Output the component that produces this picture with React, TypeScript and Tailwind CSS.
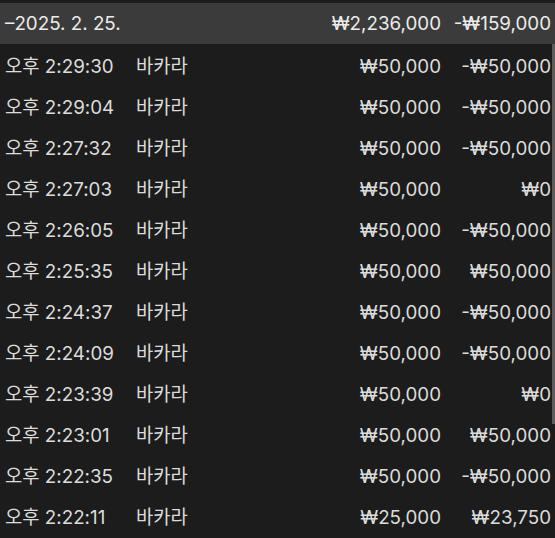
const rows: [string, string, string][] = [
  ['오후 2:29:30', '₩50,000', '-₩50,000'],
  ['오후 2:29:04', '₩50,000', '-₩50,000'],
  ['오후 2:27:32', '₩50,000', '-₩50,000'],
  ['오후 2:27:03', '₩50,000', '₩0'],
  ['오후 2:26:05', '₩50,000', '-₩50,000'],
  ['오후 2:25:35', '₩50,000', '₩50,000'],
  ['오후 2:24:37', '₩50,000', '-₩50,000'],
  ['오후 2:24:09', '₩50,000', '-₩50,000'],
  ['오후 2:23:39', '₩50,000', '₩0'],
  ['오후 2:23:01', '₩50,000', '₩50,000'],
  ['오후 2:22:35', '₩50,000', '-₩50,000'],
  ['오후 2:22:11', '₩25,000', '₩23,750'],
];

export default function App() {
  return (
    <div
      className="h-[538px] w-[555px] overflow-hidden bg-[#1c1c1c] pt-[3px] text-[18.8px] leading-none text-[#dcdcdc]"
      style={{ fontFamily: "Inter, 'Noto Sans CJK KR', sans-serif" }}
    >
      <div className="flex h-[41px] items-center bg-[#3b3b3b] pt-[2px] pl-[5px] pr-[4px] text-[#ececec]">
        <span className="flex-1">–2025. 2. 25.</span>
        <span className="w-[130px] text-right">₩2,236,000</span>
        <span className="w-[110px] text-right">-₩159,000</span>
      </div>
      <div className="flex">
        <div className="flex-1">
          {rows.map(([time, bet, result]) => (
            <div key={time} className="flex h-[41px] items-center pt-[6px] pl-[5px] pr-px">
              <span className="w-[131px]">{time}</span>
              <span className="flex-1">바카라</span>
              <span className="w-[130px] text-right">{bet}</span>
              <span className="w-[110px] text-right">{result}</span>
            </div>
          ))}
        </div>
        <div className="h-[380px] w-[3px] bg-[#5c5c5c]" />
      </div>
    </div>
  );
}
